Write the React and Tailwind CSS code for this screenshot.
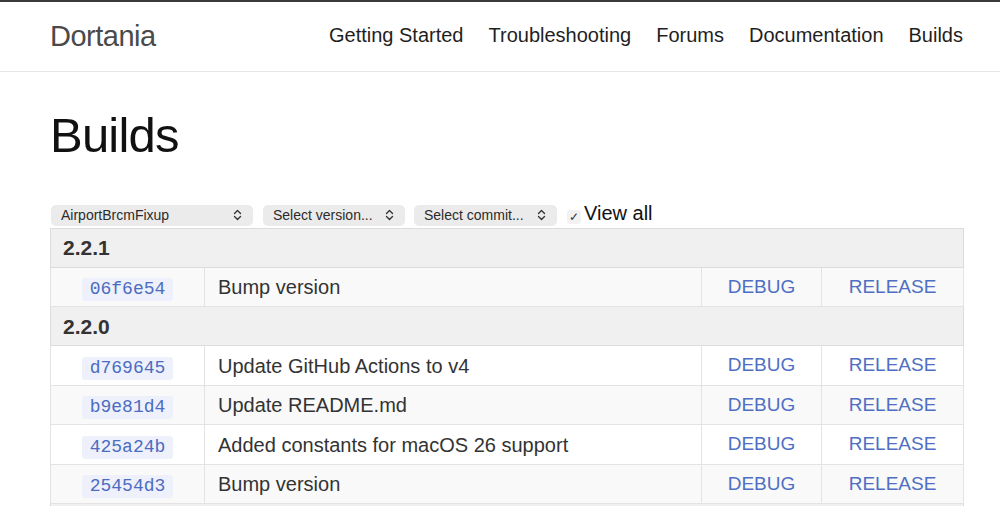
import React from 'react';

const nav = ['Getting Started', 'Troubleshooting', 'Forums', 'Documentation', 'Builds'];

const groups = [
  {
    version: '2.2.1',
    commits: [{ hash: '06f6e54', msg: 'Bump version' }],
  },
  {
    version: '2.2.0',
    commits: [
      { hash: 'd769645', msg: 'Update GitHub Actions to v4' },
      { hash: 'b9e81d4', msg: 'Update README.md' },
      { hash: '425a24b', msg: 'Added constants for macOS 26 support' },
      { hash: '25454d3', msg: 'Bump version' },
    ],
  },
  // next group starts just below the fold
  {
    version: '',
    commits: [],
  },
];

const Chevrons = () => (
  <svg width="9" height="12" viewBox="0 0 9 12" fill="none" stroke="#333" strokeWidth="1.4" strokeLinecap="round" strokeLinejoin="round">
    <path d="M1.5 4.5 L4.5 1.5 L7.5 4.5" />
    <path d="M1.5 7.5 L4.5 10.5 L7.5 7.5" />
  </svg>
);

const Select = ({ label, width }) => (
  <div className={`flex items-center justify-between h-[21px] rounded-[5px] bg-[#ebebeb] pl-[10px] pr-[11px] text-[14px] text-[#2b2b2b] ${width}`}>
    <span>{label}</span>
    <Chevrons />
  </div>
);

const App = () => {
  let stripe = 0;
  return (
    <div className="min-h-[506px] bg-white text-[#222]" style={{ fontFamily: '"Liberation Sans", Arial, sans-serif' }}>
      <div className="h-[2px] bg-[#3a3a3a]" />
      <header className="h-[70px] border-b border-[#e6e6e6] flex items-center justify-between px-[50px] pr-[37px]">
        <div className="text-[29px] text-[#4a4a4a] tracking-[-0.5px]">Dortania</div>
        <nav className="flex gap-[25px] text-[20px] text-[#1f1f1f] -mt-[3px]">
          {nav.map(n => (
            <span key={n}>{n}</span>
          ))}
        </nav>
      </header>

      <main className="px-[50px] pr-[36px]">
        <h1 className="text-[49px] leading-[1.2] mt-[34px] tracking-[-0.8px] text-[#111]">Builds</h1>

        <div className="flex items-center h-[21px] gap-[9px] mt-[40px] pl-[1px]">
          <Select label="AirportBrcmFixup" width="w-[202px]" />
          <Select label="Select version..." width="w-[142px] ml-[1px]" />
          <Select label="Select commit..." width="w-[143px]" />
          <div className="flex items-center h-[21px] ml-[1px]">
            <span className="flex items-center justify-center w-[14px] h-[14px] rounded-[3px] bg-[#f2f2f2] text-[12px] text-[#333] mt-[3px]">✓</span>
            <span className="text-[20px] leading-[21px] ml-[3px] text-[#111] -mt-[3px]">View all</span>
          </div>
        </div>

        <table className="w-full border-collapse mt-[2px] text-[20px] text-[#333]">
          <tbody>
            {groups.map((g, i) => (
              <React.Fragment key={i}>
                <tr className="h-[39px] bg-[#f0f0f0]">
                  <td colSpan={4} className="border border-[#dcdcdc] px-[12px] font-bold text-[21px] text-[#333]">
                    {g.version}
                  </td>
                </tr>
                {g.commits.map(c => {
                  stripe += 1;
                  const bg = stripe % 2 === 1 ? 'bg-[#f9f9f9]' : 'bg-white';
                  return (
                    <tr key={c.hash} className={`h-[39.5px] ${bg}`}>
                      <td className="border border-[#e3e3e3] w-[154px] text-center">
                        <code
                          className="inline-block px-[8px] py-[1px] rounded-[3px] bg-[#eef1fb] text-[#4b6cc0] text-[18px] leading-[21px]"
                          style={{ fontFamily: '"Liberation Mono", "Courier New", monospace' }}
                        >
                          {c.hash}
                        </code>
                      </td>
                      <td className="border border-[#e3e3e3] px-[13px]">{c.msg}</td>
                      <td className="border border-[#e3e3e3] w-[120px] text-center text-[19px] text-[#4e6fc3]">DEBUG</td>
                      <td className="border border-[#e3e3e3] w-[142px] text-center text-[19px] text-[#4e6fc3]">RELEASE</td>
                    </tr>
                  );
                })}
              </React.Fragment>
            ))}
          </tbody>
        </table>
      </main>
    </div>
  );
};

export default App;
